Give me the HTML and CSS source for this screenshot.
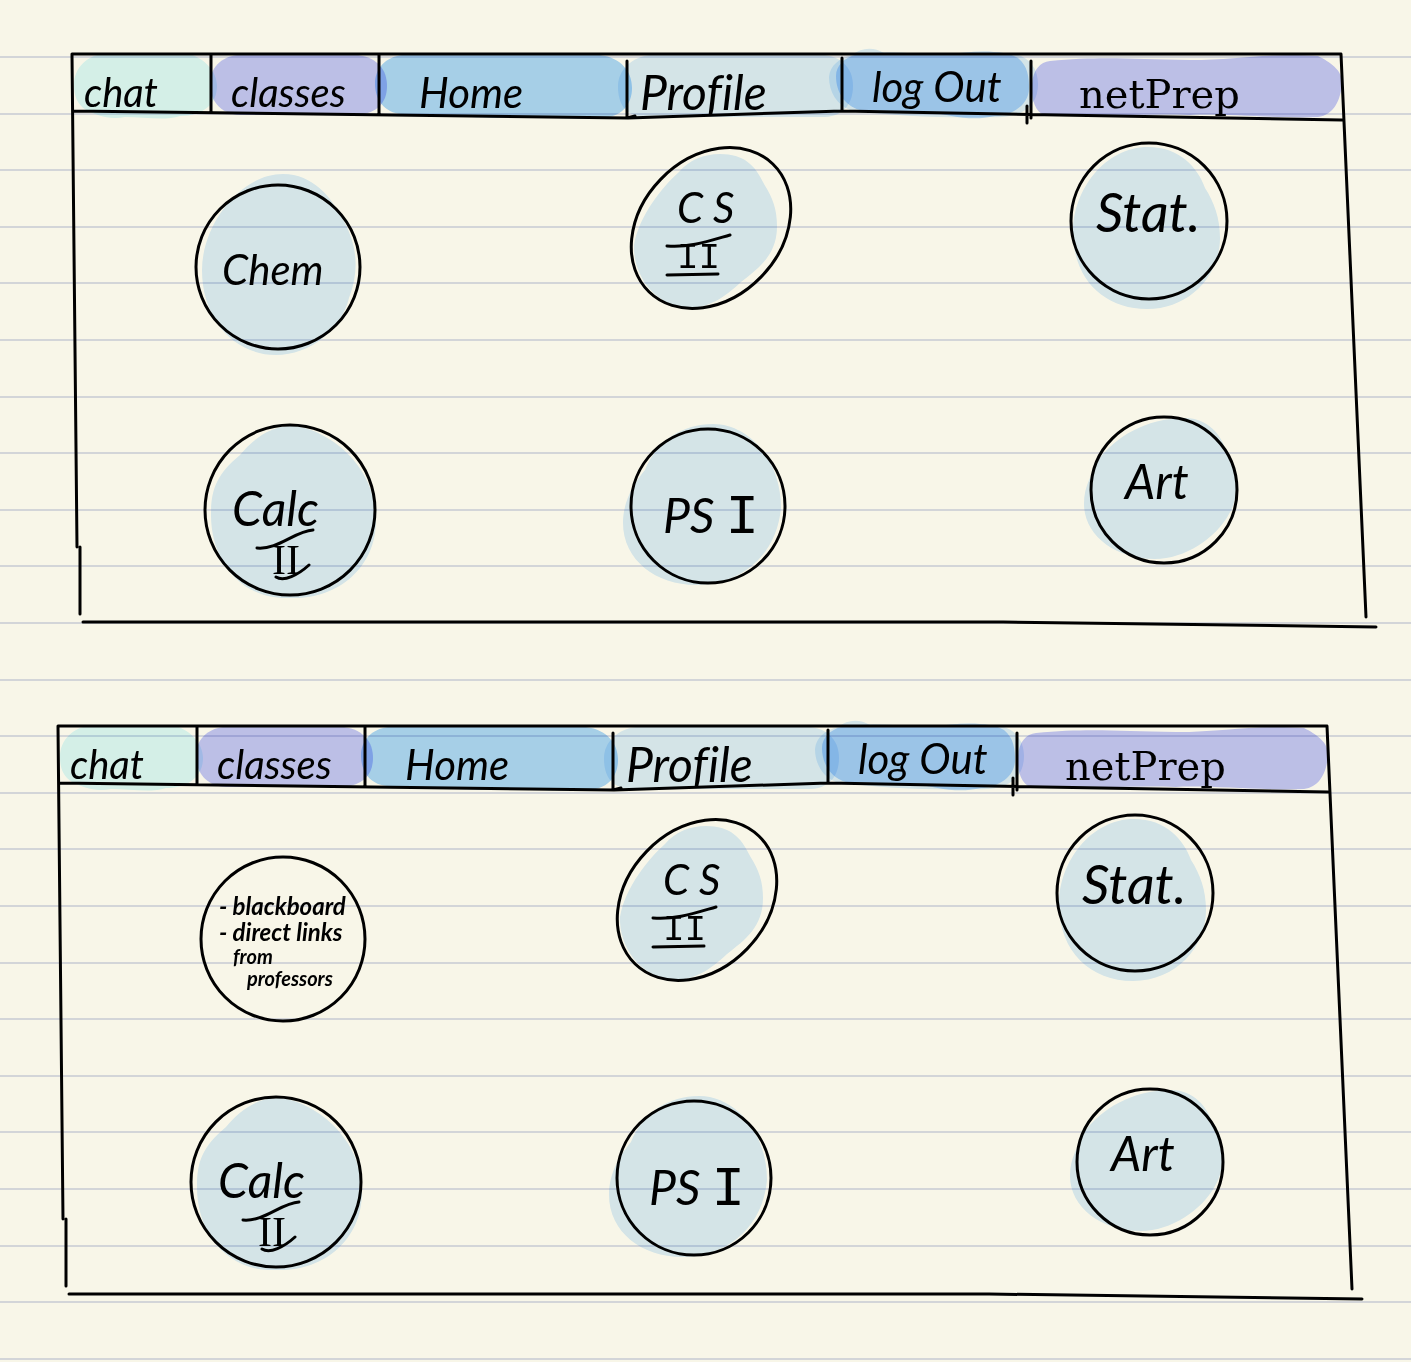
FILE: index.html
```html
<!DOCTYPE html>
<html lang="en">
<head>
<meta charset="utf-8">
<meta name="viewport" content="width=device-width, initial-scale=1">
<title>netPrep classes</title>
<link rel="stylesheet" href="styles.css">
</head>
<body>
<main class="paper">
  <section class="screen">
    <svg class="frame" viewBox="0 0 1411 672" preserveAspectRatio="none" aria-hidden="true">
      <g id="frame">
        <path class="ink-mint" d="M106 53H185C202 56 217 70 217 86C217 104 203 116 180 116C165 121 145 117 125 117C108 120 97 115 86 110C77 104 74 96 74 85C74 67 88 55 106 53Z"/>
        <path class="ink-purple" d="M237 55H358C378 58 387 70 387 86C387 103 377 113 358 115H240C219 114 210 99 210 84C210 68 221 57 237 55Z"/>
        <path class="ink-blue" d="M402 55H600C622 58 632 72 632 88C632 104 622 118 600 118C575 120 555 117 525 117C485 119 455 116 402 114C384 113 375 99 375 84C375 68 386 57 402 55Z"/>
        <path class="ink-teal" d="M650 55H825C844 58 853 70 853 86C853 103 844 116 825 117H645C625 116 618 104 618 86C618 70 632 57 650 55Z"/>
        <path class="ink-teal" d="M852 55C862 47 874 47 884 53H1005C1026 53 1038 66 1038 84C1038 104 1025 119 990 117C950 118 900 117 850 110C837 105 829 92 829 77C830 65 840 58 852 55Z"/>
        <path class="ink-sky" d="M855 55C885 50 915 54 945 55C975 50 1005 50 1018 58C1028 66 1029 78 1029 88C1029 104 1014 115 995 116C970 122 950 115 930 112L860 110C845 106 836 92 836 76C836 66 844 58 855 55Z"/>
        <path class="ink-purple" d="M1050 61C1100 56 1130 59 1190 60C1240 60 1270 52 1318 56C1330 62 1342 70 1342 82C1341 100 1334 115 1318 117C1280 119 1220 113 1190 115C1140 113 1090 118 1045 115C1034 112 1031 96 1032 84C1033 70 1040 62 1050 61Z"/>
        <path class="line" d="M77 547L72 54H1341L1366 617M80 547V614M83 622H1003L1376 627M73 111L628 118L842 111L1342 120M211 54V112M379 54V114M627 61V118L635 116M842 58V111M1031 61V118M1027 106V123"/>
      </g>
    </svg>
    <nav class="tabs" aria-label="Main">
      <a class="tab tab-chat" href="#chat">chat</a>
      <a class="tab tab-classes" href="#classes">classes</a>
      <a class="tab tab-home" href="#home">Home</a>
      <a class="tab tab-profile" href="#profile">Profile</a>
      <a class="tab tab-logout" href="#logout">log Out</a>
      <a class="tab tab-brand" href="#netprep">netPrep</a>
    </nav>
    <div class="board">
      <a class="bubble chem" href="#chem">
        <svg viewBox="196 185 164 164" aria-hidden="true">
          <path class="ink-teal" d="M283 174C313 174 332 198 342 218C357 243 360 270 349 298C341 330 310 355 276 355C235 355 202 320 202 270C202 225 240 174 283 174Z"/>
          <circle class="line" cx="278" cy="267" r="82"/>
        </svg>
        <span class="name">Chem</span>
      </a>
      <a class="bubble cs" href="#cs2">
        <svg viewBox="632 147 160 162" aria-hidden="true">
          <g id="cs-shape">
            <path class="ink-teal" d="M721 154C745 154 756 165 765 184C774 198 778 210 778 226C778 255 760 268 742 282C725 298 710 308 688 308C655 305 634 275 635 245C640 215 665 185 680 172C690 160 705 154 721 154Z"/>
            <ellipse class="line" cx="712" cy="228" rx="89" ry="70" transform="rotate(-46 712 228)"/>
            <path class="line" d="M668 246C690 248 710 241 731 235M668 275L719 274"/>
          </g>
        </svg>
        <span class="name">C S</span>
        <span class="numeral">II</span>
      </a>
      <a class="bubble stat" href="#stat">
        <svg viewBox="1070 142 158 158" aria-hidden="true">
          <g id="stat-shape">
            <path class="ink-teal" d="M1148 147C1180 147 1198 168 1205 188C1214 202 1220 218 1220 238C1220 275 1190 309 1147 309C1105 309 1073 280 1073 232C1073 190 1105 147 1148 147Z"/>
            <circle class="line" cx="1149" cy="221" r="78"/>
          </g>
        </svg>
        <span class="name">Stat.</span>
      </a>
      <a class="bubble calc" href="#calc2">
        <svg viewBox="204 424 172 172" aria-hidden="true">
          <g id="calc-shape">
            <path class="ink-teal" d="M291 426C320 426 376 460 376 520C376 570 335 600 290 598C240 600 211 560 211 515C211 490 216 475 240 455C252 440 270 426 291 426Z"/>
            <circle class="line" cx="290" cy="510" r="85"/>
            <path class="line" d="M257 548C278 550 295 531 313 530M276 577C284 582 298 575 309 565"/>
          </g>
        </svg>
        <span class="name">Calc</span>
        <span class="numeral">II</span>
      </a>
      <a class="bubble psi" href="#ps1">
        <svg viewBox="630 429 154 154" aria-hidden="true">
          <g id="psi-shape">
            <path class="ink-teal" d="M712 424C748 424 780 460 780 508C775 560 735 585 695 585C655 585 622 560 622 523C622 500 634 482 644 470C656 440 682 424 712 424Z"/>
            <circle class="line" cx="707" cy="506" r="77"/>
          </g>
        </svg>
        <span class="name">PS <span class="one">I</span></span>
      </a>
      <a class="bubble art" href="#art">
        <svg viewBox="1091 417 147 147" aria-hidden="true">
          <g id="art-shape">
            <path class="ink-teal" d="M1185 418C1208 418 1221 435 1226 450C1240 475 1238 500 1229 514C1216 538 1185 559 1155 559C1115 559 1084 535 1084 504C1084 485 1092 475 1099 459C1115 438 1145 418 1185 418Z"/>
            <circle class="line" cx="1164" cy="490" r="73"/>
          </g>
        </svg>
        <span class="name">Art</span>
      </a>
    </div>
  </section>

  <section class="screen screen-detail">
    <svg class="frame" viewBox="0 0 1411 672" preserveAspectRatio="none" aria-hidden="true"><use href="#frame"/></svg>
    <nav class="tabs" aria-label="Main, class details">
      <a class="tab tab-chat" href="#chat">chat</a>
      <a class="tab tab-classes" href="#classes">classes</a>
      <a class="tab tab-home" href="#home">Home</a>
      <a class="tab tab-profile" href="#profile">Profile</a>
      <a class="tab tab-logout" href="#logout">log Out</a>
      <a class="tab tab-brand" href="#netprep">netPrep</a>
    </nav>
    <div class="board">
      <div class="bubble chem-detail">
        <svg viewBox="0 0 164 164" aria-hidden="true"><circle class="line" cx="82" cy="82" r="82"/></svg>
        <p class="note"><span>- blackboard</span><span>- direct links</span><span class="from">from</span><span class="professors">professors</span></p>
      </div>
      <a class="bubble cs" href="#cs2">
        <svg viewBox="632 147 160 162" aria-hidden="true"><use href="#cs-shape"/></svg>
        <span class="name">C S</span>
        <span class="numeral">II</span>
      </a>
      <a class="bubble stat" href="#stat">
        <svg viewBox="1070 142 158 158" aria-hidden="true"><use href="#stat-shape"/></svg>
        <span class="name">Stat.</span>
      </a>
      <a class="bubble calc" href="#calc2">
        <svg viewBox="204 424 172 172" aria-hidden="true"><use href="#calc-shape"/></svg>
        <span class="name">Calc</span>
        <span class="numeral">II</span>
      </a>
      <a class="bubble psi" href="#ps1">
        <svg viewBox="630 429 154 154" aria-hidden="true"><use href="#psi-shape"/></svg>
        <span class="name">PS <span class="one">I</span></span>
      </a>
      <a class="bubble art" href="#art">
        <svg viewBox="1091 417 147 147" aria-hidden="true"><use href="#art-shape"/></svg>
        <span class="name">Art</span>
      </a>
    </div>
  </section>
</main>
</body>
</html>
```
FILE: styles.css
```css
* {
  box-sizing: border-box;
}

body {
  margin: 0;
  color: #000;
  font-family: Lato, "Liberation Sans", sans-serif;
  font-style: italic;
  font-variant-ligatures: none;
}

/* ruled notebook paper: a blank top edge, then five rules per 283px tile */
.paper {
  min-height: 100vh;
  padding-bottom: 18px;
  overflow: hidden;
  background-color: #f8f6e8;
  background-image:
    linear-gradient(#f8f6e8, #f8f6e8),
    linear-gradient(
      #d3d5d8 2px, transparent 2px, transparent 57px,
      #d3d5d8 57px, #d3d5d8 59px, transparent 59px, transparent 113px,
      #d3d5d8 113px, #d3d5d8 115px, transparent 115px, transparent 170px,
      #d3d5d8 170px, #d3d5d8 172px, transparent 172px, transparent 226px,
      #d3d5d8 226px, #d3d5d8 228px, transparent 228px);
  background-size: 100% 20px, 100% 283px;
  background-position: 0 0, 0 56px;
  background-repeat: no-repeat, repeat;
}

.screen {
  position: relative;
  padding: 54px 0 75px;
}

.screen-detail {
  margin: 0 14px 0 -14px;
}

.screen a {
  color: inherit;
  text-decoration: none;
}

svg {
  position: absolute;
  top: 0;
  left: 0;
  width: 100%;
  height: 100%;
  overflow: visible;
  mix-blend-mode: multiply;
  pointer-events: none;
}

svg path {
  mix-blend-mode: multiply;
}

.line {
  fill: none;
  stroke: #000;
  stroke-width: 3px;
  stroke-linecap: round;
  stroke-linejoin: round;
}

.ink-mint { fill: #daf8fe; }
.ink-purple { fill: #c2c6fd; }
.ink-blue { fill: #abd7fe; }
.ink-teal { fill: #daedfe; }
.ink-sky { fill: #bbdbff; }

.tabs {
  display: grid;
  grid-template-columns: 139fr 168fr 248fr 215fr 189fr 310fr;
  height: 64px;
  margin: 0 70px 0 72px;
}

.tab {
  position: relative;
  line-height: 64px;
  white-space: nowrap;
  padding-top: 6px;
}

.tab-chat { padding-left: 12px; font-size: 40px; }
.tab-classes { padding-left: 20px; font-size: 40px; }
.tab-home { padding-left: 40px; font-size: 42px; }
.tab-profile { padding-left: 13px; font-size: 48px; }
.tab-logout { padding: 0 0 0 30px; font-size: 42px; }
.tab-brand {
  padding: 8px 0 0 48px;
  font: normal 40px/64px "DejaVu Serif", serif;
}

.board {
  display: grid;
  grid-template-columns: 435fr 439fr 341fr;
  grid-template-rows: 275px 180px;
  align-items: start;
  margin-left: 196px;
  padding-top: 24px;
}

.bubble {
  position: relative;
  display: block;
  font-size: 42px;
  line-height: 48px;
  white-space: nowrap;
}

.name,
.numeral {
  position: relative;
  display: block;
}

.numeral,
.one {
  font-family: "Liberation Mono", monospace;
  font-style: normal;
}

.numeral {
  font-size: 36px;
  line-height: 40px;
}

.chem { width: 164px; height: 164px; margin-top: 43px; padding: 60px 0 0 26px; }
.cs { width: 160px; height: 162px; margin-top: 5px; padding: 36px 0 0 46px; }
.stat { width: 158px; height: 158px; padding: 46px 0 0 26px; font-size: 54px; }
.calc { width: 172px; height: 172px; margin: 7px 0 0 8px; padding: 60px 0 0 28px; font-size: 48px; }
.psi { width: 154px; height: 154px; margin-top: 12px; padding: 62px 0 0 32px; font-size: 48px; }
.art { width: 147px; height: 147px; margin-left: 21px; padding: 40px 0 0 34px; font-size: 48px; }

.cs .numeral { padding-top: 8px; }
.calc .numeral {
  padding: 8px 0 0 40px;
  font-family: "Liberation Serif", serif;
  font-size: 42px;
}

.one {
  font-size: 56px;
}

.chem-detail {
  width: 164px;
  height: 164px;
  margin: 43px 0 0 19px;
}

.note {
  position: relative;
  margin: 0;
  padding: 36px 0 0 18px;
  font-size: 24px;
  font-weight: 700;
  line-height: 26px;
}

.note span { display: block; }
.note .from { padding-left: 14px; font-size: 20px; line-height: 22px; }
.note .professors { padding-left: 28px; font-size: 20px; line-height: 22px; }
```
